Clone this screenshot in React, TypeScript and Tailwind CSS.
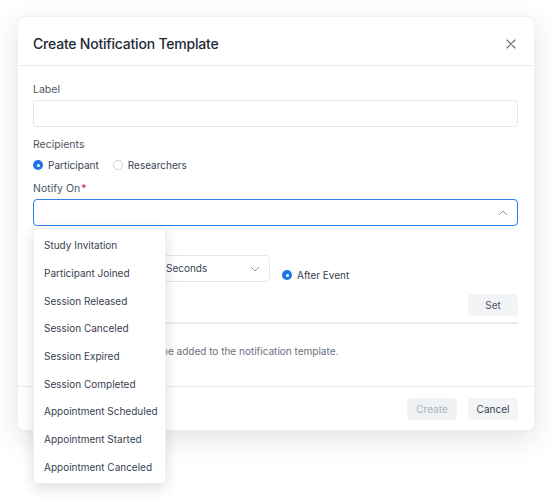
import React from "react"

const events = [
    'Study Invitation',
    'Participant Joined',
    'Session Released',
    'Session Canceled',
    'Session Expired',
    'Session Completed',
    'Appointment Scheduled',
    'Appointment Started',
    'Appointment Canceled',
]

function Radio({ checked, label }: { checked?: boolean; label: string }) {
    return (
        <label className="flex items-center gap-[5px] text-[10px] leading-[14px] text-[#374151]">
            {checked ? (
                <span className="flex h-[10px] w-[10px] items-center justify-center rounded-full bg-[#1d74e7]">
                    <span className="h-[3px] w-[3px] rounded-full bg-white" />
                </span>
            ) : (
                <span className="h-[10px] w-[10px] rounded-full border border-[#cbd2da] bg-white" />
            )}
            {label}
        </label>
    )
}

export default function App() {
    return (
        <div className="min-h-[500px] bg-white px-[17px] pt-[16px]" style={{ fontFamily: 'Inter, "Noto Sans", sans-serif' }}>
            <div className="relative rounded-[8px] border border-[#eef0f3] bg-white shadow-[0_8px_28px_rgba(15,23,42,0.12)]">
                {/* Header */}
                <div className="flex items-center justify-between border-b border-[#e8ebef] pl-[15px] pr-[18px] pt-[17px] pb-[11px]">
                    <h2 className="text-[14px] leading-[20px] font-medium tracking-[-0.015em] text-[#1f2937]">Create Notification Template</h2>
                    <svg width="10" height="10" viewBox="0 0 10 10" className="text-[#5b6b7b]">
                        <path d="M1 1L9 9M9 1L1 9" stroke="currentColor" strokeWidth="1.1" strokeLinecap="round" />
                    </svg>
                </div>

                {/* Body */}
                <div className="pl-[15px] pr-[16px] pt-[16px] pb-[27px]">
                    <p className="text-[10.5px] leading-[16px] text-[#4b5563]">Label</p>
                    <div className="mt-[2px] h-[27px] rounded-[4px] border border-[#e3e7ec] bg-white" />

                    <p className="mt-[10px] text-[10.5px] leading-[16px] text-[#4b5563]">Recipients</p>
                    <div className="mt-[5px] flex items-center gap-[14px]">
                        <Radio checked label="Participant" />
                        <Radio label="Researchers" />
                    </div>

                    <p className="mt-[9px] text-[10.5px] leading-[16px] text-[#4b5563]">
                        Notify On<span className="ml-[1px] text-[#d0104c]">*</span>
                    </p>
                    <div className="mt-[2px] flex h-[27px] items-center justify-end rounded-[4px] border-[1.5px] border-[#2b7fe9] bg-white pr-[9px]">
                        <svg width="10" height="6" viewBox="0 0 10 6" className="text-[#8a96a3]">
                            <path d="M1 5L5 1L9 5" fill="none" stroke="currentColor" strokeWidth="1" />
                        </svg>
                    </div>

                    {/* Timing row (partly covered by the menu) */}
                    <div className="mt-[11px] h-[16px]" />
                    <div className="mt-[2px] flex items-end gap-[12px]">
                        <div className="h-[27px] w-[109px] rounded-[4px] border border-[#e3e7ec]" />
                        <div className="flex h-[27px] w-[116px] items-center justify-between rounded-[4px] border border-[#e3e7ec] pl-[11px] pr-[9px] text-[10px] text-[#374151]">
                            Seconds
                            <svg width="10" height="6" viewBox="0 0 10 6" className="text-[#8a96a3]">
                                <path d="M1 1L5 5L9 1" fill="none" stroke="currentColor" strokeWidth="1" />
                            </svg>
                        </div>
                        <Radio checked label="After Event" />
                    </div>

                    {/* Content toolbar */}
                    <div className="mt-[12px] flex justify-end border-b-2 border-[#e8ebef] pb-[6px]">
                        <button className="h-[22px] w-[50px] rounded-[4px] bg-[#f3f4f6] text-[10px] text-[#4b5563]">Set</button>
                    </div>
                    <p className="mt-[19px] text-[10px] leading-[16px] text-[#6b7280]">
                        No notification content will be added to the notification template.
                    </p>
                </div>

                {/* Footer */}
                <div className="flex justify-end gap-[11px] border-t border-[#e8ebef] px-[16px] pt-[11px] pb-[10px]">
                    <button className="h-[22px] w-[50px] rounded-[4px] bg-[#eef2f5] text-[10px] text-[#a9b3bd]">Create</button>
                    <button className="h-[22px] w-[50px] rounded-[4px] bg-[#f3f4f6] text-[10px] text-[#374151]">Cancel</button>
                </div>

                {/* Notify On menu */}
                <div className="absolute left-[15px] top-[211px] w-[133px] rounded-[4px] border border-[#eef0f3] bg-white pt-[3px] pb-[2px] shadow-[0_4px_14px_rgba(15,23,42,0.14)]">
                    {events.map((e) => (
                        <div key={e} className="flex h-[27.7px] items-center whitespace-nowrap px-[10px] text-[10px] text-[#374151]">
                            {e}
                        </div>
                    ))}
                </div>
            </div>
        </div>
    )
}
